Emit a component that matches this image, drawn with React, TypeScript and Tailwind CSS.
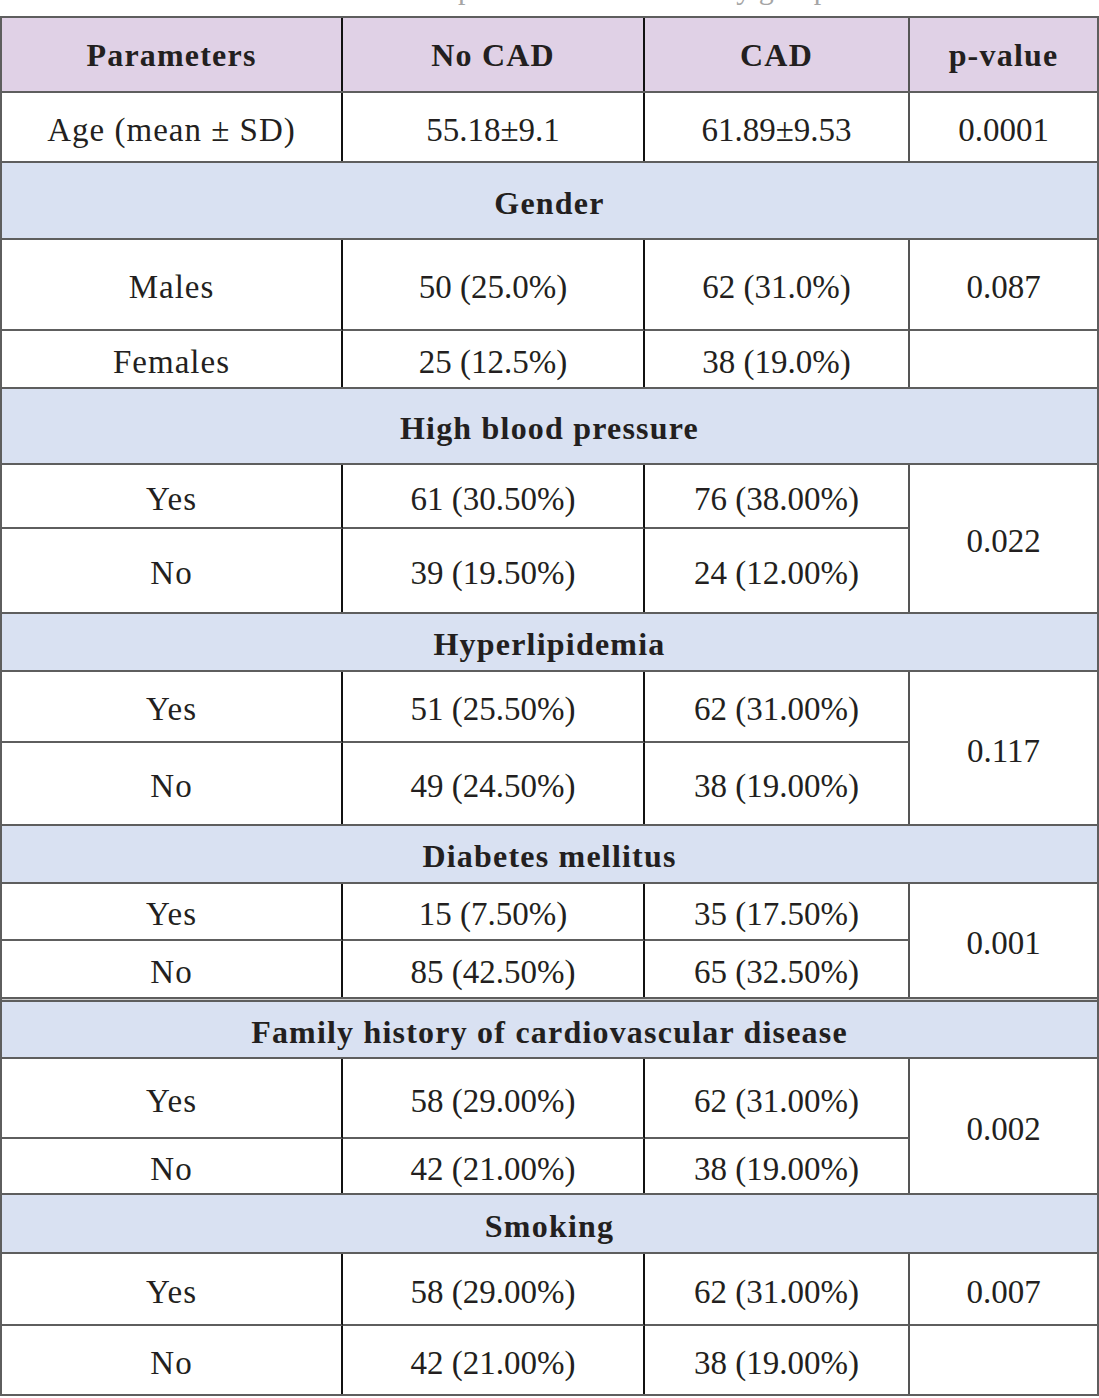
import React from "react";

const F = { fontFamily: '"Liberation Serif", "Times New Roman", serif' };

const word = "text-[33px] tracking-[1px] text-[#231f20]";
const num = "text-[33px] text-[#231f20]";

function Cell({
  children,
  className = "",
}: {
  children?: React.ReactNode;
  className?: string;
}) {
  return (
    <div className={`flex items-center justify-center pt-[7px] ${className}`}>
      {children}
    </div>
  );
}

function Section({ title, h, extra = "" }: { title: string; h: string; extra?: string }) {
  return (
    <div
      className={`flex items-center justify-center pt-[4px] bg-[#d9e1f2] border-b-2 border-[#5e5e5e] ${h} ${extra}`}
    >
      <span className="text-[32px] font-bold tracking-[1.2px] text-[#231f20]">{title}</span>
    </div>
  );
}

const COLS = "grid grid-cols-[341px_302px_265px_187px]";

function Pair({
  rows,
  p,
  pMode,
  h1,
  h2,
  lastBorder = true,
}: {
  rows: [string, string, string][];
  p: string;
  pMode: "span" | "first";
  h1: number;
  h2: number;
  lastBorder?: boolean;
}) {
  return (
    <div
      className={`${COLS} ${lastBorder ? "border-b-2 border-[#5e5e5e]" : ""}`}
      style={{ gridTemplateRows: `${h1}px ${h2 - (lastBorder ? 2 : 0)}px` }}
    >
      <Cell className="border-r-2 border-r-[#111] border-b-2 border-b-[#5e5e5e]">
        <span className={word}>{rows[0][0]}</span>
      </Cell>
      <Cell className="border-r-2 border-r-[#111] border-b-2 border-b-[#5e5e5e]">
        <span className={num}>{rows[0][1]}</span>
      </Cell>
      <Cell className="border-r-2 border-r-[#555] border-b-2 border-b-[#5e5e5e]">
        <span className={num}>{rows[0][2]}</span>
      </Cell>
      {pMode === "span" ? (
        <Cell className="row-span-2">
          <span className={num}>{p}</span>
        </Cell>
      ) : (
        <Cell className="border-b-2 border-b-[#5e5e5e]">
          <span className={num}>{p}</span>
        </Cell>
      )}
      <Cell className="border-r-2 border-r-[#111]">
        <span className={word}>{rows[1][0]}</span>
      </Cell>
      <Cell className="border-r-2 border-r-[#111]">
        <span className={num}>{rows[1][1]}</span>
      </Cell>
      <Cell className="border-r-2 border-r-[#555]">
        <span className={num}>{rows[1][2]}</span>
      </Cell>
      {pMode === "first" && <Cell />}
    </div>
  );
}

export default function App() {
  return (
    <div className="w-[1099px] h-[1398px] bg-white overflow-hidden" style={F}>
      <div className="h-[16px] overflow-hidden pl-[25px]">
        <div className="mt-[-26px] text-[30px] leading-[30px] whitespace-nowrap text-[#a5a5a5]">
          <span className="text-[#b3d0ee] font-bold">Table 1:</span> Baseline characteristics of patients in the two study groups
        </div>
      </div>
      <div className="border-2 border-[#5e5e5e] w-[1099px]">
        {/* Header */}
        <div className={`${COLS} h-[75px] bg-[#e0d1e6] border-b-2 border-[#5e5e5e]`}>
          <div className="flex items-center justify-center border-r-2 border-r-[#111]">
            <span className="text-[32px] font-bold tracking-[1.2px] text-[#231f20]">Parameters</span>
          </div>
          <div className="flex items-center justify-center border-r-2 border-r-[#111]">
            <span className="text-[32px] font-bold tracking-[1.2px] text-[#231f20]">No CAD</span>
          </div>
          <div className="flex items-center justify-center border-r-2 border-r-[#555]">
            <span className="text-[32px] font-bold tracking-[1.2px] text-[#231f20]">CAD</span>
          </div>
          <div className="flex items-center justify-center">
            <span className="text-[32px] font-bold tracking-[1.2px] text-[#231f20]">p-value</span>
          </div>
        </div>
        {/* Age */}
        <div className={`${COLS} h-[70px] border-b-2 border-[#5e5e5e]`}>
          <Cell className="border-r-2 border-r-[#111]">
            <span className={word}>Age (mean ± SD)</span>
          </Cell>
          <Cell className="border-r-2 border-r-[#111]">
            <span className={num}>55.18±9.1</span>
          </Cell>
          <Cell className="border-r-2 border-r-[#555]">
            <span className={num}>61.89±9.53</span>
          </Cell>
          <Cell>
            <span className={num}>0.0001</span>
          </Cell>
        </div>

        <Section title="Gender" h="h-[77px]" />
        <Pair
          rows={[
            ["Males", "50 (25.0%)", "62 (31.0%)"],
            ["Females", "25 (12.5%)", "38 (19.0%)"],
          ]}
          p="0.087"
          pMode="first"
          h1={91}
          h2={58}
        />

        <Section title="High blood pressure" h="h-[76px]" />
        <Pair
          rows={[
            ["Yes", "61 (30.50%)", "76 (38.00%)"],
            ["No", "39 (19.50%)", "24 (12.00%)"],
          ]}
          p="0.022"
          pMode="span"
          h1={64}
          h2={85}
        />

        <Section title="Hyperlipidemia" h="h-[58px]" />
        <Pair
          rows={[
            ["Yes", "51 (25.50%)", "62 (31.00%)"],
            ["No", "49 (24.50%)", "38 (19.00%)"],
          ]}
          p="0.117"
          pMode="span"
          h1={71}
          h2={83}
        />

        <Section title="Diabetes mellitus" h="h-[58px]" />
        <Pair
          rows={[
            ["Yes", "15 (7.50%)", "35 (17.50%)"],
            ["No", "85 (42.50%)", "65 (32.50%)"],
          ]}
          p="0.001"
          pMode="span"
          h1={57}
          h2={58}
        />
        <div className="h-[1px] bg-[#cfcfcf]" />
        <Section
          title="Family history of cardiovascular disease"
          h="h-[59px]"
          extra="border-t-2 border-t-[#5e5e5e]"
        />
        <Pair
          rows={[
            ["Yes", "58 (29.00%)", "62 (31.00%)"],
            ["No", "42 (21.00%)", "38 (19.00%)"],
          ]}
          p="0.002"
          pMode="span"
          h1={80}
          h2={56}
        />

        <Section title="Smoking" h="h-[59px]" />
        <Pair
          rows={[
            ["Yes", "58 (29.00%)", "62 (31.00%)"],
            ["No", "42 (21.00%)", "38 (19.00%)"],
          ]}
          p="0.007"
          pMode="first"
          h1={72}
          h2={68}
          lastBorder={false}
        />
      </div>
    </div>
  );
}
